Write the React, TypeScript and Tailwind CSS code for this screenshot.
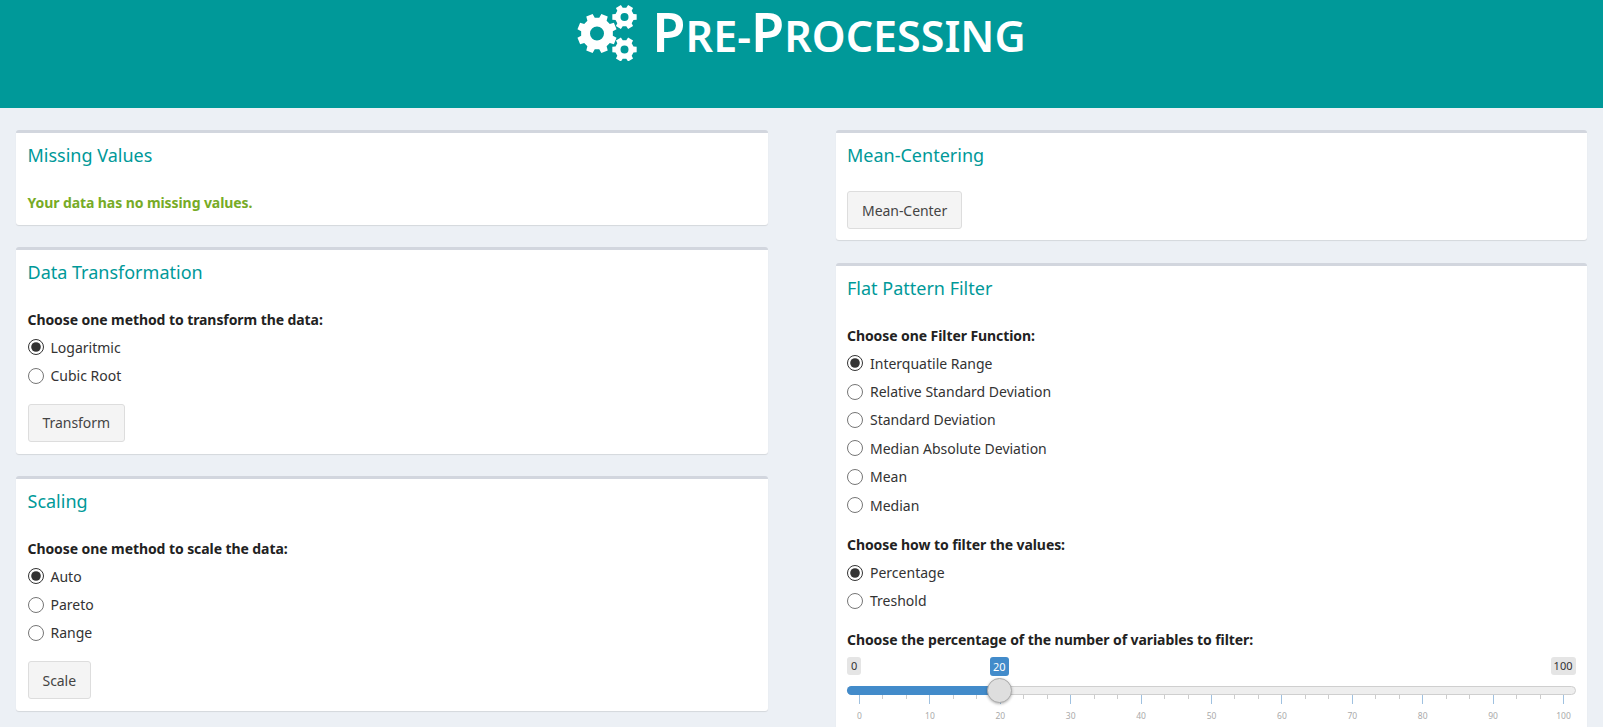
const sans = "font-['Noto_Sans',sans-serif]";

// gear outline with a round hole, teeth evenly spaced
function gearPath(cx: number, cy: number, outer: number, root: number, hole: number, teeth: number, rot = 0) {
  const pts: string[] = [];
  const step = (Math.PI * 2) / teeth;
  for (let i = 0; i < teeth; i++) {
    const a = rot + i * step;
    const at = (r: number, d: number) =>
      `${(cx + r * Math.cos(a + d)).toFixed(2)} ${(cy + r * Math.sin(a + d)).toFixed(2)}`;
    pts.push(at(root, -step * 0.32), at(outer, -step * 0.22), at(outer, step * 0.22), at(root, step * 0.32));
  }
  return (
    `M${pts.join("L")}Z` +
    `M${cx - hole} ${cy}a${hole} ${hole} 0 1 0 ${hole * 2} 0a${hole} ${hole} 0 1 0 ${-hole * 2} 0Z`
  );
}

function CogsIcon() {
  return (
    <svg width="60" height="56" viewBox="0 0 60 56" className="shrink-0" fill="#fff">
      <path fillRule="evenodd" d={gearPath(20, 28.5, 20, 16, 7, 8, Math.PI / 8)} />
      <path fillRule="evenodd" d={gearPath(47.5, 12, 12.5, 9.5, 4, 6, 0)} />
      <path fillRule="evenodd" d={gearPath(47.5, 44.5, 12.5, 9.5, 4, 6, 0)} />
    </svg>
  );
}

function Card({ title, children, className = "" }: { title: string; children: React.ReactNode; className?: string }) {
  return (
    <div className={`rounded-[3px] border-t-[3px] border-[#d2d6de] bg-white px-[11.5px] shadow-[0_1px_1px_rgba(0,0,0,0.1)] ${className}`}>
      <h3 className="pt-[12px] text-[18px] leading-[20px] text-[#009999]">{title}</h3>
      {children}
    </div>
  );
}

function Radios({ name, label, options }: { name: string; label: string; options: string[] }) {
  return (
    <div>
      <p className="text-[14px] leading-[20px] font-bold tracking-[-0.08px] text-[#222]">{label}</p>
      <div className="mt-[3px]">
        {options.map((o, i) => (
          <label key={o} className="flex h-[28.4px] items-center gap-[7px] text-[14px] text-[#333]">
            <input type="radio" name={name} defaultChecked={i === 0} className="m-0 size-4 accent-[#333]" />
            {o}
          </label>
        ))}
      </div>
    </div>
  );
}

function Btn({ children }: { children: React.ReactNode }) {
  return (
    <button className="h-[38px] rounded-[3px] border border-[#ddd] bg-[#f4f4f4] px-[14px] text-[14px] tracking-[-0.05px] text-[#444]">
      {children}
    </button>
  );
}

function Slider() {
  const ticks = Array.from({ length: 31 }, (_, i) => (i * 10) / 3);
  return (
    <div className="relative mt-[1px] h-[90px]">
      <span className="absolute top-[6px] left-0 rounded-[3px] bg-[#e5e5e5] px-[4px] text-[11px] leading-[18px] text-[#333]">0</span>
      <span className="absolute top-[6px] left-[143px] rounded-[3px] bg-[#428bca] px-[3px] text-[11px] leading-[19px] text-white">20</span>
      <span className="absolute top-[6px] right-0 rounded-[3px] bg-[#e5e5e5] px-[3px] text-[11px] leading-[18px] text-[#333]">100</span>

      <div className="absolute top-[35px] right-0 left-0 h-[9px] rounded-full border border-[#cfcfcf] bg-[#eee]" />
      <div className="absolute top-[35px] left-0 h-[9px] w-[155px] rounded-l-full bg-[#428bca]" />
      <div className="absolute top-[27px] left-[140px] z-10 size-[25px] rounded-full border border-[#aaa] bg-[#dedede] shadow-[0_1px_3px_rgba(0,0,0,0.3)]" />

      {ticks.map((t, i) => (
        <span
          key={t}
          className={`absolute top-[44px] w-px ${i % 3 === 0 ? "h-[9px] bg-[#9fc1e0]" : "h-[4px] bg-[#ccc]"}`}
          style={{ left: 12 + t * 7.04 }}
        />
      ))}
      {[0, 10, 20, 30, 40, 50, 60, 70, 80, 90, 100].map((t) => (
        <span
          key={t}
          className="absolute top-[59px] w-8 -translate-x-1/2 text-center text-[8.5px] leading-[12px] text-[#aaa]"
          style={{ left: 12.5 + t * 7.04 }}
        >
          {t}
        </span>
      ))}
    </div>
  );
}

export default function App() {
  return (
    <div className={`h-screen overflow-hidden bg-[#ecf0f5] ${sans}`}>
      <header className="flex h-[108px] justify-center bg-[#009999] pt-[5px] text-white">
        <div className="flex h-[56px] items-center gap-[15px]">
          <CogsIcon />
          <h1 className="flex items-baseline font-semibold">
            <span className="text-[54px] leading-[56px]">P</span>
            <span className="text-[43px] leading-[56px] uppercase">re-</span>
            <span className="text-[54px] leading-[56px]">P</span>
            <span className="text-[43px] leading-[56px] uppercase">rocessing</span>
          </h1>
        </div>
      </header>

      <main className="grid grid-cols-2 gap-x-[68px] px-4 pt-[22px]">
        <div className="flex flex-col gap-[22px]">
          <Card title="Missing Values" className="h-[95px]">
            <p className="mt-[28px] text-[14px] leading-[20px] font-bold tracking-[-0.08px] text-[#77ab26]">Your data has no missing values.</p>
          </Card>
          <Card title="Data Transformation" className="h-[207px]">
            <div className="mt-[28px]">
              <Radios name="transform" label="Choose one method to transform the data:" options={["Logaritmic", "Cubic Root"]} />
            </div>
            <div className="mt-[14px]"><Btn>Transform</Btn></div>
          </Card>
          <Card title="Scaling" className="h-[235px]">
            <div className="mt-[28px]">
              <Radios name="scale" label="Choose one method to scale the data:" options={["Auto", "Pareto", "Range"]} />
            </div>
            <div className="mt-[14px]"><Btn>Scale</Btn></div>
          </Card>
        </div>

        <div className="flex flex-col gap-[23px]">
          <Card title="Mean-Centering" className="h-[110px]">
            <div className="mt-[26px]"><Btn>Mean-Center</Btn></div>
          </Card>
          <Card title="Flat Pattern Filter">
            <div className="mt-[28px]">
              <Radios
                name="filter"
                label="Choose one Filter Function:"
                options={["Interquatile Range", "Relative Standard Deviation", "Standard Deviation", "Median Absolute Deviation", "Mean", "Median"]}
              />
            </div>
            <div className="mt-[16px]">
              <Radios name="how" label="Choose how to filter the values:" options={["Percentage", "Treshold"]} />
            </div>
            <p className="mt-[15px] text-[14px] leading-[20px] font-bold tracking-[-0.08px] text-[#222]">Choose the percentage of the number of variables to filter:</p>
            <Slider />
          </Card>
        </div>
      </main>
    </div>
  );
}
